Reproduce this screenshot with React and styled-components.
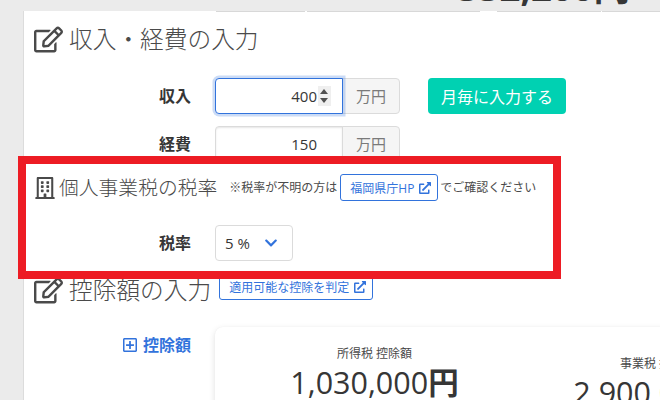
import React from 'react';
import styled, {createGlobalStyle} from 'styled-components';
import {FaRegEdit, FaRegBuilding, FaExternalLinkAlt, FaRegPlusSquare, FaChevronDown} from 'react-icons/fa';

const GlobalStyle = createGlobalStyle`
    html, body {
        margin: 0;
        padding: 0;
        background: #fff;
    }
    body {
        font-family: "Open Sans", "Noto Sans CJK JP", sans-serif;
        color: #4a4a4a;
    }
`

const Page = styled.div`
    position: relative;
    width: 660px;
    height: 400px;
    overflow: hidden;
    background: #ebebeb;
`

const TopBar = styled.div`
    display: flex;
    justify-content: flex-end;
    align-items: flex-end;
    height: 11px;
    padding-right: 30px;
    overflow: hidden;
`

const TopTotal = styled.div`
    font-size: 36.5px;
    line-height: 1;
    font-weight: 700;
    color: #363636;
    padding-bottom: 6px;
    flex-shrink: 0;
`

const Panel = styled.div`
    margin-left: 23px;
    height: 389px;
    padding: 11px 0 0 10px;
    box-sizing: border-box;
    background: #fff;
    border-left: 1px solid #dcdcdc;
    position: relative;
`

const TopEdge = styled.div`
    position: absolute;
    top: 0;
    left: 192px;
    right: 0;
    height: 1px;
    background: linear-gradient(to right,
        #d8d8d8 0, #d8d8d8 89px, #fff 89px, #fff 91px,
        #d8d8d8 91px, #d8d8d8 264px, #fff 264px, #fff 281px,
        #d8d8d8 281px, #d8d8d8 385px, #fff 385px, #fff 386px,
        #d8d8d8 386px);
`

const Heading = styled.div`
    display: flex;
    align-items: ${p => p.$top ? 'flex-start' : 'center'};
    height: ${p => p.$height || 34}px;
    margin-top: ${p => p.$mt || 0}px;
    color: #4a4a4a;
`

const HeadingIcon = styled.span`
    display: flex;
    align-items: center;
    width: ${p => p.$width}px;
    height: ${p => p.$boxHeight || 34}px;
    flex-shrink: 0;
    font-size: ${p => p.$size}px;
    color: #4a4a4a;
`

const HeadingText = styled.h2`
    margin: 0;
    font-size: ${p => p.$small ? 19.8 : 23.7}px;
    line-height: ${p => p.$small ? 27 : 34}px;
    font-weight: 300;
    white-space: nowrap;
`

const Note = styled.span`
    font-size: 12px;
    line-height: 27px;
    white-space: nowrap;
    color: #4a4a4a;
    margin-left: ${p => p.$ml || 0}px;
`

const LinkButton = styled.a`
    display: inline-flex;
    align-items: center;
    gap: 5px;
    height: 27px;
    box-sizing: border-box;
    padding: 0 6px 0 9px;
    margin-left: ${p => p.$ml}px;
    border: 1px solid #3273dc;
    border-radius: 3px;
    background: #fff;
    color: #3273dc;
    font-size: 12px;
    white-space: nowrap;
    flex-shrink: 0;

    > svg {
        font-size: 12px;
    }
`

const FormRow = styled.div`
    display: grid;
    grid-template-columns: 157px 1fr;
    column-gap: 24px;
    align-items: ${p => p.$top ? 'start' : 'center'};
    margin-top: ${p => p.$mt}px;
`

const Label = styled.label`
    font-size: 16px;
    font-weight: 700;
    line-height: 36px;
    color: ${p => p.$link ? '#3273dc' : '#363636'};
    display: flex;
    justify-content: flex-end;
    align-items: center;
    gap: 5px;
`

const Controls = styled.div`
    display: flex;
    align-items: center;
`

const NumberInput = styled.div`
    position: relative;
    width: 128px;
    height: 36px;
    box-sizing: border-box;
    padding-right: 25px;
    border: 1px solid ${p => p.$focused ? '#3273dc' : '#dbdbdb'};
    border-radius: 4px 0 0 4px;
    box-shadow: ${p => p.$focused ? '0 0 0 2.5px rgba(50, 115, 220, .25)' : 'inset 0 1px 2px rgba(10, 10, 10, .1)'};
    background: #fff;
    color: #363636;
    font-size: 15px;
    line-height: 34px;
    text-align: right;
    z-index: ${p => p.$focused ? 1 : 0};
`

const Spinner = styled.span`
    position: absolute;
    top: 7px;
    right: 11px;
    width: 13px;
    height: 20px;
    background: #efefef;

    &::before, &::after {
        content: '';
        position: absolute;
        left: 2px;
        border-left: 4.5px solid transparent;
        border-right: 4.5px solid transparent;
    }

    &::before {
        top: 3px;
        border-bottom: 5px solid #505050;
    }

    &::after {
        bottom: 3px;
        border-top: 5px solid #505050;
    }
`

const Addon = styled.div`
    width: 58px;
    height: 36px;
    box-sizing: border-box;
    margin-left: -1px;
    border: 1px solid #dbdbdb;
    border-radius: 0 4px 4px 0;
    background: #f5f5f5;
    color: #7a7a7a;
    font-size: 15px;
    line-height: 34px;
    text-align: center;
`

const PrimaryButton = styled.button`
    width: 138px;
    height: 36px;
    margin-left: 28px;
    padding: 0;
    border: 0;
    border-radius: 4px;
    background: #00d1b2;
    color: #fff;
    font-family: inherit;
    font-size: 16px;
`

const RateSelect = styled.div`
    display: flex;
    align-items: center;
    width: 78px;
    height: 36px;
    box-sizing: border-box;
    padding-left: 9px;
    border: 1px solid #dbdbdb;
    border-radius: 4px;
    background: #fff;
    color: #363636;
    font-size: 15px;

    > svg {
        margin-left: 14px;
        font-size: 14px;
        color: #3273dc;
    }
`

const Card = styled.div`
    display: flex;
    width: 600px;
    height: 120px;
    border-radius: 8px;
    background: #fff;
    box-shadow: 0 2px 6px rgba(10, 10, 10, .12), 0 0 1px rgba(10, 10, 10, .06);
`

const Amount = styled.div`
    flex: none;
    width: ${p => p.$width}px;
    padding-top: ${p => p.$offset}px;
    text-align: center;
`

const AmountLabel = styled.div`
    font-size: 12px;
    line-height: 16px;
    color: #4a4a4a;
`

const AmountValue = styled.div`
    margin-top: 2px;
    font-size: 30.5px;
    line-height: 36px;
    color: #363636;
    white-space: nowrap;

    > b {
        font-weight: 700;
    }
`

const Highlight = styled.div`
    position: absolute;
    left: 18px;
    top: 156px;
    width: 543px;
    height: 123px;
    box-sizing: border-box;
    border: 8px solid #ed1c24;
    pointer-events: none;
`

export default function App() {
    return (
        <Page>
            <GlobalStyle />
            <TopBar>
                <TopTotal>332,200円</TopTotal>
            </TopBar>
            <Panel>
                <TopEdge />
                <Heading>
                    <HeadingIcon $width={35} $size={29}><FaRegEdit /></HeadingIcon>
                    <HeadingText>収入・経費の入力</HeadingText>
                </Heading>
                <FormRow $mt={22}>
                    <Label>収入</Label>
                    <Controls>
                        <NumberInput $focused>400<Spinner /></NumberInput>
                        <Addon>万円</Addon>
                        <PrimaryButton>月毎に入力する</PrimaryButton>
                    </Controls>
                </FormRow>
                <FormRow $mt={12}>
                    <Label>経費</Label>
                    <Controls>
                        <NumberInput>150</NumberInput>
                        <Addon>万円</Addon>
                    </Controls>
                </FormRow>
                <Heading $height={27} $mt={12}>
                    <HeadingIcon $width={25} $size={22} $boxHeight={27}><FaRegBuilding /></HeadingIcon>
                    <HeadingText $small>個人事業税の税率</HeadingText>
                    <Note $ml={12}>※税率が不明の方は</Note>
                    <LinkButton $ml={3}>福岡県庁HP <FaExternalLinkAlt /></LinkButton>
                    <Note $ml={2}>でご確認ください</Note>
                </Heading>
                <FormRow $mt={24}>
                    <Label>税率</Label>
                    <Controls>
                        <RateSelect>5 % <FaChevronDown /></RateSelect>
                    </Controls>
                </FormRow>
                <Heading $height={34} $mt={12} $top>
                    <HeadingIcon $width={35} $size={29}><FaRegEdit /></HeadingIcon>
                    <HeadingText>控除額の入力</HeadingText>
                    <LinkButton $ml={8}>適用可能な控除を判定 <FaExternalLinkAlt /></LinkButton>
                </Heading>
                <FormRow $mt={20} $top>
                    <Label $link><FaRegPlusSquare />控除額</Label>
                    <Card>
                        <Amount $width={319} $offset={19}>
                            <AmountLabel>所得税 控除額</AmountLabel>
                            <AmountValue>1,030,000<b>円</b></AmountValue>
                        </Amount>
                        <Amount $width={247} $offset={29}>
                            <AmountLabel>事業税 控除額</AmountLabel>
                            <AmountValue>2,900,000<b>円</b></AmountValue>
                        </Amount>
                    </Card>
                </FormRow>
            </Panel>
            <Highlight />
        </Page>
    );
}
